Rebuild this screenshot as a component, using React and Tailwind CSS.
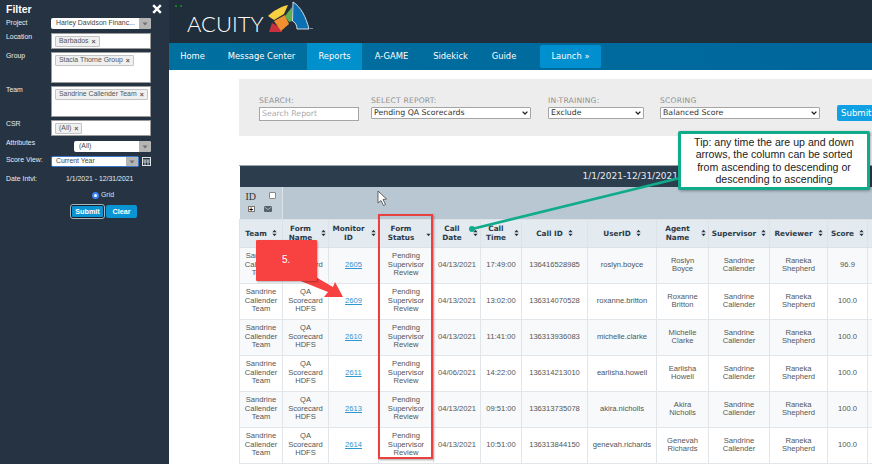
const COLS = [43, 46, 50, 55, 47, 41, 66, 69, 52, 61, 58, 40, 40];

function Sort({ down }) {
  return (
    <svg width="5" height="8" viewBox="0 0 6 9" className="inline-block shrink-0">
      {!down && <path d="M3 0.5 L5.6 3.7 H0.4 Z" fill="#2b3a48" />}
      <path d="M3 8.5 L5.6 5.3 H0.4 Z" fill="#2b3a48" />
    </svg>
  );
}

function Head({ children, down }) {
  return (
    <th className="border border-[#dbe2e8] bg-[#e3eaf0] p-0 align-middle">
      <div className="flex items-center justify-center gap-[5px] px-[2px] font-['DejaVu_Sans',sans-serif] text-[7.3px] font-bold leading-[9px] text-[#2b3a48]">
        <span className="text-center">{children}</span>
        <Sort down={down} />
      </div>
    </th>
  );
}

const ROWS = [
  ["2605", "04/13/2021", "17:49:00", "136416528985", "roslyn.boyce", "Roslyn", "Boyce", "96.9"],
  ["2609", "04/13/2021", "13:02:00", "136314070528", "roxanne.britton", "Roxanne", "Britton", "100.0"],
  ["2610", "04/13/2021", "11:41:00", "136313936083", "michelle.clarke", "Michelle", "Clarke", "100.0"],
  ["2611", "04/06/2021", "14:22:00", "136314213010", "earlisha.howell", "Earlisha", "Howell", "100.0"],
  ["2613", "04/13/2021", "09:51:00", "136313735078", "akira.nicholls", "Akira", "Nicholls", "100.0"],
  ["2614", "04/13/2021", "10:51:00", "136313844150", "genevah.richards", "Genevah", "Richards", "100.0"],
];

function Td({ children, className = "" }) {
  return <td className={"border border-[#e1e6ea] p-0 text-center align-middle " + className}>{children}</td>;
}

function Tag({ children }) {
  return (
    <span className="inline-flex h-[11px] items-center gap-[3px] whitespace-nowrap rounded-[1px] border border-[#c4c4c4] bg-[#f0f0f0] px-[3px] text-[6.9px] leading-none text-[#555]">
      {children}
      <span className="text-[7px] font-bold leading-none text-[#555]">×</span>
    </span>
  );
}

function Arrow() {
  return (
    <span className="flex h-full w-[12px] shrink-0 items-center justify-center bg-[#b5b5b5]">
      <svg width="6" height="4" viewBox="0 0 6 4"><path d="M0.5 0.5 H5.5 L3 3.5 Z" fill="#707070" /></svg>
    </span>
  );
}

function Field({ label, h, mt, children }) {
  return (
    <div className="flex" style={{ marginTop: mt }}>
      <span className="-mt-[1px] w-[45px] shrink-0 text-[6.9px] leading-[9px] text-[#e8edf2]">{label}</span>
      <div className="flex w-[100px] flex-col items-start gap-0 border border-[#9a9a9a] bg-white pl-[3px] pt-[2px]" style={{ height: h }}>
        {children}
      </div>
    </div>
  );
}

function Sidebar() {
  return (
    <aside className="relative w-[169px] shrink-0 bg-[#263342] pl-[6px] font-['Liberation_Sans',sans-serif] text-white">
      <div className="flex h-[18px] items-start justify-between pr-[7px] pt-[3px]">
        <span className="text-[10.5px] font-bold leading-[12px]">Filter</span>
        <svg width="10" height="10" viewBox="0 0 10 10" className="mt-[1px]"><path d="M1.2 1.2 L8.8 8.8 M8.8 1.2 L1.2 8.8" stroke="#fff" strokeWidth="2.4" /></svg>
      </div>
      <div className="flex h-[12px] items-start">
        <span className="w-[45px] text-[6.9px] leading-[9px] text-[#e8edf2]">Project</span>
        <div className="flex h-[11px] w-[100px] items-center justify-between overflow-hidden rounded-[2px] bg-white pl-[5px] text-[6.9px] leading-none text-[#444]">
          <span className="whitespace-nowrap">Harley Davidson Financ...</span><Arrow />
        </div>
      </div>
      <Field label="Location" h="16px" mt="3px"><Tag>Barbados</Tag></Field>
      <Field label="Group" h="31px" mt="3px"><Tag>Stacia Thorne Group</Tag></Field>
      <Field label="Team" h="31px" mt="3px"><Tag>Sandrine Callender Team</Tag></Field>
      <Field label="CSR" h="16px" mt="3px"><Tag>(All)</Tag></Field>
      <div className="mt-[5px] flex h-[11px] items-start">
        <span className="-mt-[3px] w-[68px] text-[6.9px] leading-[9px] text-[#e8edf2]">Attributes</span>
        <div className="flex h-[11px] w-[77px] items-center justify-between overflow-hidden rounded-[2px] bg-white pl-[5px] text-[6.9px] leading-none text-[#444]">
          <span>(All)</span><Arrow />
        </div>
      </div>
      <div className="mt-[4px] flex h-[12px] items-start">
        <span className="-mt-[1px] w-[45px] whitespace-nowrap text-[6.9px] leading-[9px] text-[#e8edf2]">Score View:</span>
        <div className="flex h-[11px] w-[88px] items-center justify-between overflow-hidden rounded-[2px] border border-[#3b78c9] bg-white pl-[4px] text-[6.9px] leading-none text-[#444]">
          <span>Current Year</span><Arrow />
        </div>
        <svg width="9" height="9" viewBox="0 0 9 9" className="ml-[3px] mt-[1px]">
          <rect x="0.5" y="0.5" width="8" height="8" fill="none" stroke="#dfe4e8" />
          <path d="M0.5 3 H8.5 M0.5 5 H8.5 M3 3 V8.5 M6 3 V8.5" stroke="#dfe4e8" strokeWidth="0.8" />
        </svg>
      </div>
      <div className="mt-[5px] flex h-[10px] items-center text-[6.9px] leading-[9px] text-[#e8edf2]">
        <span className="w-[60px]">Date Intvl:</span>
        <span>1/1/2021 - 12/31/2021</span>
      </div>
      <div className="mt-[8px] flex h-[9px] items-center pl-[86px] text-[6.9px] text-[#dfe4e8]">
        <span className="mr-[2px] inline-block h-[7px] w-[7px] rounded-full border-2 border-[#3b82f6] bg-white"></span>
        Grid
      </div>
      <div className="mt-[5px] flex items-start gap-[2px] pl-[65px]">
        <button className="h-[13px] w-[33px] rounded-[2px] border border-[#10202e] bg-[#0a94d4] text-[7.2px] font-bold leading-none text-white outline outline-1 outline-[#aab4bc]">Submit</button>
        <button className="h-[13px] w-[31px] rounded-[2px] bg-[#0a94d4] text-[7.2px] font-bold leading-none text-white">Clear</button>
      </div>
    </aside>
  );
}

function Logo() {
  return (
    <div className="relative flex h-[43px] items-center pl-[18px]">
      <span className="absolute left-[6px] top-[5px] h-[2px] w-[2px] bg-[#1a7a2a]"></span>
      <span className="absolute left-[11px] top-[5px] h-[2px] w-[2px] bg-[#1a7a2a]"></span>
      <span className="mt-[4px] font-['Lato',sans-serif] text-[22px] font-light leading-none text-white">ACUITY</span>
      <svg width="48" height="36" viewBox="267 0 48 36" className="absolute left-[98px] top-0">
        <path d="M269 32 L272 23 L281 28 L282 32 Z" fill="#c8323f" />
        <path d="M274 21 L285 15 L289 24 L281 31 Z" fill="#ef8f2f" />
        <path d="M268 16 C273 11 280 7 288 5 L284 14 L274 20 Z" fill="#f8d040" />
        <path d="M292 7 L285 16 L289 22 L292 21 Z" fill="#5fb04d" />
        <path d="M293 2 C301 7 306 17 309 29 L297 29 C297 25 295 22 292.5 21 Z" fill="#0c6fb1" stroke="#fff" strokeWidth="0.8" />
      </svg>
      <span className="absolute left-[141px] top-[28px] h-[1px] w-[3px] bg-[#7f8a94]"></span>
    </div>
  );
}

function Nav() {
  const items = [["Home", "w-[47px]"], ["Message Center", "w-[91px]"], ["Reports", "w-[55px]"], ["A-GAME", "w-[59px]"], ["Sidekick", "w-[59px]"], ["Guide", "w-[48px]"]];
  return (
    <nav className="flex h-[27px] items-stretch bg-gradient-to-r from-[#00709f] to-[#00669c] font-['DejaVu_Sans',sans-serif] text-[8.4px] text-white">
      {items.map(([t, w]) => (
        <span key={t} className={"flex items-center justify-center whitespace-nowrap " + w + (t === "Reports" ? " bg-[#0090cb]" : "")}>{t}</span>
      ))}
      <span className="my-[2px] ml-3 flex w-[61px] items-center justify-center rounded-[2px] bg-[#0090d0]">Launch »</span>
    </nav>
  );
}

function Label({ children }) {
  return <div className="whitespace-nowrap text-[7.6px] leading-[9px] tracking-[0.2px] text-[#909090]">{children}</div>;
}

function Sel({ w, children }) {
  return (
    <div className="flex h-[12px] items-center justify-between rounded-[1px] border border-[#a5a5a5] bg-white pl-[2px] pr-[2px] text-[7.8px] leading-none text-[#333]" style={{ width: w }}>
      <span>{children}</span>
      <svg width="6" height="4" viewBox="0 0 6 4"><path d="M0.6 0.6 L3 3 L5.4 0.6" fill="none" stroke="#222" strokeWidth="1.3" /></svg>
    </div>
  );
}

function Toolbar() {
  return (
    <div className="ml-[70px] mt-[9px] flex h-[57px] items-start overflow-hidden bg-[#ededed] pl-[20px] pt-[17px] font-['DejaVu_Sans',sans-serif]">
      <div className="w-[112px] shrink-0">
        <Label>SEARCH:</Label>
        <div className="mt-[2px] flex h-[14px] w-[100px] items-center border border-[#a5a5a5] bg-white pl-[2px] text-[7.8px] text-[#aaa]">Search Report</div>
      </div>
      <div className="w-[177px] shrink-0">
        <Label>SELECT REPORT:</Label>
        <div className="mt-[2px]"><Sel w="160px">Pending QA Scorecards</Sel></div>
      </div>
      <div className="w-[112px] shrink-0">
        <Label>IN-TRAINING:</Label>
        <div className="mt-[2px]"><Sel w="96px">Exclude</Sel></div>
      </div>
      <div className="w-[177px] shrink-0">
        <Label>SCORING</Label>
        <div className="mt-[2px]"><Sel w="160px">Balanced Score</Sel></div>
      </div>
      <div className="mt-[9px] flex h-[16px] w-[50px] shrink-0 items-center rounded-[2px] bg-[#12a0e4] pl-[4px] text-[8.6px] text-white">Submit</div>
    </div>
  );
}

function Table() {
  return (
    <div className="ml-[70px] mt-[29px] overflow-hidden border-t border-[#9aa5ae]">
      <table className="w-[668px] table-fixed border-collapse font-['Liberation_Sans',sans-serif]">
        <colgroup>
          {COLS.map((c, i) => <col key={i} style={{ width: c }} />)}
        </colgroup>
        <thead>
          <tr className="h-[21px] bg-[#2c3d4e]">
            <th colSpan={13} className="p-0 text-left">
              <span className="block pl-[343px] font-['DejaVu_Sans',sans-serif] text-[9px] font-normal text-[#e6ebef]">1/1/2021-12/31/2021</span>
            </th>
          </tr>
          <tr className="h-[32px] bg-[#b9c7d3]">
            <th className="border-r border-[#dbe2e8] bg-[#c3d0da] p-0 align-top">
              <div className="relative h-[31px] text-left">
                <span className="absolute left-[6px] top-[4px] font-['Liberation_Serif',serif] text-[10px] font-normal leading-[12px] text-[#333]">ID</span>
                <span className="absolute left-[29px] top-[5px] h-[7px] w-[7px] rounded-[1px] border border-[#888] bg-white"></span>
                <span className="absolute left-[8px] top-[19px] flex h-[6px] w-[7px] items-center justify-center border border-[#777] bg-white text-[7px] font-bold leading-none text-black">+</span>
                <svg width="8" height="6" viewBox="0 0 8 6" className="absolute left-[24px] top-[19px]"><rect width="8" height="6" rx="1" fill="#56626c" /><path d="M0.5 1 L4 3.5 L7.5 1" fill="none" stroke="#c3d0da" strokeWidth="0.7" /></svg>
              </div>
            </th>
            <th colSpan={12} className="p-0"></th>
          </tr>
          <tr className="h-[28px]">
            <Head>Team</Head>
            <Head>Form Name</Head>
            <Head>Monitor ID</Head>
            <Head down>Form Status</Head>
            <Head>Call Date</Head>
            <Head>Call Time</Head>
            <Head>Call ID</Head>
            <Head>UserID</Head>
            <Head>Agent Name</Head>
            <Head>Supervisor</Head>
            <Head>Reviewer</Head>
            <Head>Score</Head>
            <th className="border border-[#dbe2e8] bg-[#e3eaf0] p-0"></th>
          </tr>
        </thead>
        <tbody className="text-[7.6px] leading-[8.4px] text-[#555]">
          {ROWS.map((r, i) => (
            <tr key={r[0]} className={"h-[36px] " + (i % 2 === 0 ? "bg-[#f7f9fa]" : "bg-white")}>
              <Td>Sandrine<br />Callender<br />Team</Td>
              <Td>QA<br />Scorecard<br />HDFS</Td>
              <Td><span className="text-[#2f95d2] underline">{r[0]}</span></Td>
              <Td>Pending<br />Supervisor<br />Review</Td>
              <Td>{r[1]}</Td>
              <Td>{r[2]}</Td>
              <Td>{r[3]}</Td>
              <Td className="text-[#4a5560]">{r[4]}</Td>
              <Td>{r[5]}<br />{r[6]}</Td>
              <Td>Sandrine<br />Callender</Td>
              <Td>Raneka<br />Shepherd</Td>
              <Td>{r[7]}</Td>
              <Td></Td>
            </tr>
          ))}
        </tbody>
      </table>
    </div>
  );
}

function Overlays() {
  return (
    <>
      <svg width="872" height="464" viewBox="0 0 872 464" className="pointer-events-none absolute left-0 top-0">
        <path d="M378 191 V203 L381 200.5 L383.5 205.5 L385.5 204.5 L383 199.5 L386.5 199 Z" fill="#fff" stroke="#444" strokeWidth="0.8" />
        <line x1="472" y1="229" x2="684" y2="177" stroke="#10ab8b" strokeWidth="2.6" />
        <circle cx="472" cy="229" r="3" fill="#10ab8b" />
        <path d="M298 280 L328 292 L324 297 L343 297 L335 282 L333 287 L314 276 Z" fill="#f84141" />
      </svg>
      <div className="absolute left-[256px] top-[240px] flex h-[41px] w-[61px] items-start rounded-[1px] bg-[#f84141] pl-[26px] pt-[14px] font-['Liberation_Sans',sans-serif] text-[10px] leading-[12px] text-white shadow-[1px_1px_2px_rgba(0,0,0,0.3)]">5.</div>
      <div className="absolute left-[378px] top-[214px] h-[245px] w-[55px] border-2 border-[#e8413f] shadow-[1px_1px_2px_rgba(0,0,0,0.35)]"></div>
      <div className="absolute left-[678px] top-[131px] flex h-[59px] w-[192px] items-center justify-center rounded-[2px] border-[3px] border-[#10ab8b] bg-white px-[5px] text-center font-['Liberation_Sans',sans-serif] text-[10.6px] leading-[12.4px] text-[#222] shadow-[1px_1px_3px_rgba(0,0,0,0.35)]">
        Tip: any time the are up and down arrows, the column can be sorted from ascending to descending or descending to ascending
      </div>
    </>
  );
}

export default function App() {
  return (
    <div className="relative flex h-[464px] w-[872px] overflow-hidden bg-white">
      <Sidebar />
      <main className="min-w-0 flex-1">
        <div className="bg-[#202d3a]"><Logo /></div>
        <Nav />
        <Toolbar />
        <Table />
      </main>
      <Overlays />
    </div>
  );
}
